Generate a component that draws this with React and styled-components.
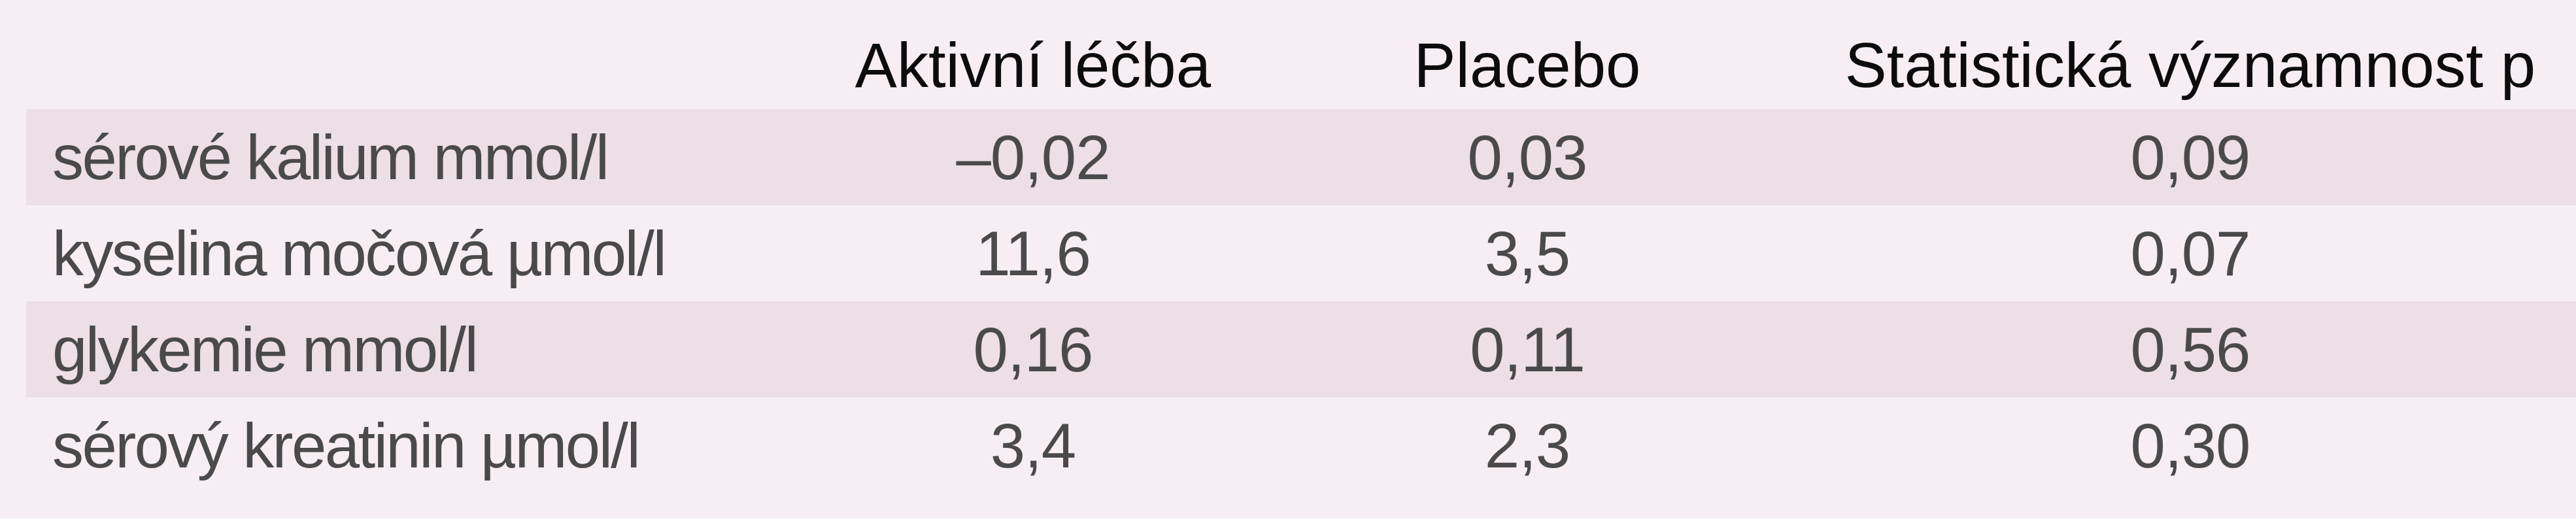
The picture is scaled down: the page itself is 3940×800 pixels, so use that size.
import React from "react";
import styled, { createGlobalStyle } from "styled-components";

const GlobalStyle = createGlobalStyle`
  html, body {
    margin: 0;
    padding: 0;
    background: #ffffff;
  }
  body {
    font-family: "Liberation Sans", Arial, sans-serif;
  }
`;

const Table = styled.div`
  width: 3940px;
  height: 793px;
  box-sizing: border-box;
  background: #f7eef3;
  padding-left: 40px;
  display: grid;
  grid-template-columns: 1208px 664px 848px 1180px;
  grid-auto-rows: 147px;
  grid-template-rows: 167px;
  align-content: start;
  font-family: "Liberation Sans", Arial, sans-serif;
  font-size: 96px;
`;

const HeadCell = styled.div`
  box-sizing: border-box;
  padding-top: 40px;
  line-height: 120px;
  color: #0c0c0c;
  text-align: center;
  white-space: nowrap;
`;

const Cell = styled.div`
  box-sizing: border-box;
  line-height: 147px;
  white-space: nowrap;
  color: #4a4a4a;
  background: ${(p) => (p.$shaded ? "#ecdfe5" : "transparent")};
  text-align: ${(p) => (p.$label ? "left" : "center")};
  padding-left: ${(p) => (p.$label ? "40px" : "0")};
  letter-spacing: ${(p) => (p.$label ? "-2.6px" : "-1px")};
`;

const headers = ["", "Aktivní léčba", "Placebo", "Statistická významnost p"];

const rows = [
  ["sérové kalium mmol/l", "–0,02", "0,03", "0,09"],
  ["kyselina močová µmol/l", "11,6", "3,5", "0,07"],
  ["glykemie mmol/l", "0,16", "0,11", "0,56"],
  ["sérový kreatinin µmol/l", "3,4", "2,3", "0,30"],
];

export default function App() {
  return (
    <>
      <GlobalStyle />
      <Table>
        {headers.map((h, i) => (
          <HeadCell key={`h${i}`}>{h}</HeadCell>
        ))}
        {rows.map((row, r) =>
          row.map((v, c) => (
            <Cell key={`${r}-${c}`} $shaded={r % 2 === 0} $label={c === 0}>
              {v}
            </Cell>
          ))
        )}
      </Table>
    </>
  );
}
